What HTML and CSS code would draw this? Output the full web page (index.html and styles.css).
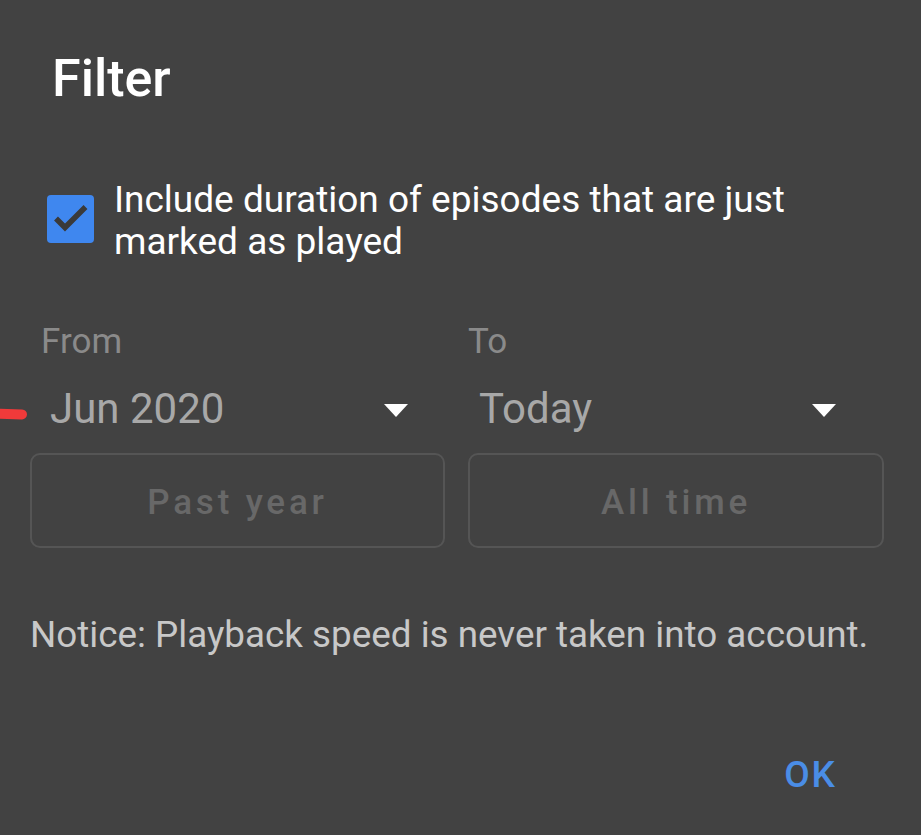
FILE: index.html
```html
<!DOCTYPE html>
<html lang="en">
<head>
<meta charset="utf-8">
<title>Filter</title>
<link rel="stylesheet" href="styles.css">
</head>
<body>
<div class="dialog">
  <h1 class="title">Filter</h1>
  <label class="check-row">
    <span class="checkbox">
      <svg viewBox="0 0 47 48" width="47" height="48"><path d="M9 23.5 L18 32.5 L38.5 12" fill="none" stroke="#3a3a3a" stroke-width="5.5" stroke-linecap="butt" stroke-linejoin="miter"/></svg>
    </span>
    <span class="check-text">Include duration of episodes that are just marked as played</span>
  </label>
  <div class="range">
    <div class="col col-from">
      <div class="label">From</div>
      <div class="spinner">
        <span class="value">Jun 2020</span>
        <span class="arrow"></span>
      </div>
      <button class="btn">Past year</button>
    </div>
    <div class="col col-to">
      <div class="label">To</div>
      <div class="spinner">
        <span class="value">Today</span>
        <span class="arrow"></span>
      </div>
      <button class="btn">All time</button>
    </div>
  </div>
  <p class="notice">Notice: Playback speed is never taken into account.</p>
  <div class="actions">
    <button class="ok">OK</button>
  </div>
</div>
<span class="pen-mark"></span>
</body>
</html>
```
FILE: styles.css
```css
html, body {
  margin: 0;
  padding: 0;
  background: #424242;
  width: 921px;
  height: 835px;
  overflow: hidden;
  font-family: Roboto, "Noto Sans", sans-serif;
}

.dialog {
  padding: 49px 0 0 0;
  box-sizing: border-box;
}

.title {
  margin: 0 0 0 52px;
  font-size: 52px;
  font-weight: 500;
  line-height: 60px;
  color: #ffffff;
}

.check-row {
  display: flex;
  align-items: flex-start;
  margin: 70px 0 0 47px;
}

.checkbox {
  flex: none;
  width: 47px;
  height: 48px;
  margin-top: 16px;
  border-radius: 4px;
  background: #3f87ef;
  display: flex;
}

.check-text {
  margin-left: 20px;
  font-size: 37px;
  line-height: 42px;
  color: #ffffff;
  width: 720px;
}

.range {
  display: grid;
  grid-template-columns: 415px 416px;
  column-gap: 23px;
  margin: 59px 0 0 30px;
}

.label {
  font-size: 35px;
  line-height: 40px;
  color: #8a8a8a;
}

.col-from .label { padding-left: 11px; }
.col-to .label { padding-left: 0; }

.spinner {
  display: flex;
  align-items: center;
  justify-content: space-between;
  height: 50px;
  margin-top: 22px;
}

.col-from .spinner { padding: 0 37px 0 20px; }
.col-to .spinner { padding: 0 48px 0 11px; }

.value {
  font-size: 42px;
  line-height: 50px;
  color: #a8a8a8;
}

.arrow {
  width: 0;
  height: 0;
  border-left: 12.5px solid transparent;
  border-right: 12.5px solid transparent;
  border-top: 13px solid #ffffff;
  margin-top: 2px;
}

.btn {
  display: block;
  width: 100%;
  height: 95px;
  margin-top: 19px;
  box-sizing: border-box;
  border: 2px solid #555555;
  border-radius: 10px;
  background: transparent;
  font-family: Roboto, "Noto Sans", sans-serif;
  font-size: 35px;
  font-weight: 500;
  letter-spacing: 3.8px;
  color: #686868;
  padding: 4px 0 0 0;
}

.notice {
  margin: 66px 0 0 30px;
  font-size: 36.8px;
  line-height: 42px;
  color: #c8c8c8;
}

.actions {
  display: flex;
  justify-content: flex-end;
  margin: 97px 84px 0 0;
}

.ok {
  background: transparent;
  border: 0;
  padding: 0;
  font-family: Roboto, "Noto Sans", sans-serif;
  font-size: 37px;
  font-weight: 500;
  letter-spacing: 2px;
  line-height: 44px;
  color: #4a8de6;
}

.pen-mark {
  position: absolute;
  left: -6px;
  top: 409px;
  width: 33px;
  height: 10px;
  border-radius: 5px;
  background: #f03a3a;
  transform: rotate(2deg);
}
```
